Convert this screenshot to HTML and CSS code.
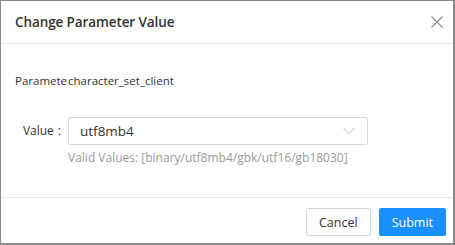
FILE: index.html
```html
<!DOCTYPE html>
<html lang="en">
<head>
    <meta charset="UTF-8">
    <meta name="viewport" content="width=device-width, initial-scale=1.0">
    <title>Change Parameter Value</title>
    <link rel="stylesheet" href="styles.css">
</head>
<body>

    <div class="dialog">
        <div class="dialog-header">
            <h2 class="dialog-title">Change Parameter Value</h2>
            <button class="close-btn" type="button" aria-label="Close">
                <svg width="12" height="12" viewBox="0 0 12 12">
                    <path d="M0.5 0.5 L11.5 11.5 M11.5 0.5 L0.5 11.5" stroke="#8c8c8c" stroke-width="1.1" fill="none"/>
                </svg>
            </button>
        </div>

        <div class="dialog-body">
            <div class="param-row">
                <span class="param-label">Parameter:</span>
                <span class="param-name">character_set_client</span>
            </div>

            <div class="form-row">
                <label class="form-label" for="value">Value</label>
                <div class="form-control">
                    <div class="select" id="value">
                        <span class="select-text">utf8mb4</span>
                        <svg class="select-arrow" width="12" height="8" viewBox="0 0 12 8">
                            <path d="M0.5 1 L6 6.5 L11.5 1" stroke="#c0c0c0" stroke-width="1" fill="none"/>
                        </svg>
                    </div>
                    <div class="help">Valid Values: [binary/utf8mb4/gbk/utf16/gb18030]</div>
                </div>
            </div>
        </div>

        <div class="dialog-footer">
            <button type="button" class="btn">Cancel</button>
            <button type="submit" class="btn btn-primary">Submit</button>
        </div>
    </div>

</body>
</html>
```

FILE: styles.css
```css
* {
    box-sizing: border-box;
    margin: 0;
    padding: 0;
}

body {
    font-family: "Open Sans", "Noto Sans", Arial, sans-serif;
    background-color: #fff;
    color: #333;
}

.dialog {
    width: 455px;
    height: 245px;
    border: 1px solid #8a8a8a;
    border-right-width: 2px;
    border-bottom-width: 2px;
    display: flex;
    flex-direction: column;
    background: #fff;
}

.dialog-header {
    height: 43px;
    padding: 0 10px 0 14px;
    display: flex;
    align-items: center;
    justify-content: space-between;
    border-bottom: 1px solid #e8e8e8;
}

.dialog-title {
    font-size: 13.5px;
    font-weight: 600;
    color: #333;
    letter-spacing: -0.1px;
}

.close-btn {
    background: none;
    border: none;
    width: 12px;
    height: 12px;
    display: flex;
    cursor: pointer;
}

.dialog-body {
    flex: 1;
    padding: 26px 14px 0 14px;
    font-size: 11.5px;
}

.param-row {
    display: flex;
    height: 20px;
    align-items: center;
}

.param-label {
    width: 53px;
    overflow: hidden;
    white-space: nowrap;
    color: #333;
}

.param-name {
    color: #333;
}

.form-row {
    display: flex;
    margin-top: 27px;
}

.form-label {
    width: 53px;
    height: 28px;
    line-height: 28px;
    text-align: right;
    font-size: 12px;
    color: #333;
}

.form-label::after {
    content: ":";
    margin: 0 7px 0 4px;
}

.form-control {
    width: 300px;
}

.select {
    height: 28px;
    border: 1px solid #d9d9d9;
    border-radius: 2px;
    padding: 0 12px 0 11px;
    display: flex;
    align-items: center;
    justify-content: space-between;
    font-size: 13.5px;
    color: #333;
}

.help {
    margin-top: 4px;
    color: #9a9a9a;
    font-size: 12px;
    line-height: 18px;
}

.dialog-footer {
    height: 46px;
    border-top: 1px solid #e8e8e8;
    display: flex;
    justify-content: flex-end;
    align-items: flex-start;
    gap: 8px;
    padding: 10px 7px 0 0;
}

.btn {
    height: 28px;
    padding: 0 12px;
    border: 1px solid #d9d9d9;
    border-radius: 2px;
    background: #fff;
    color: #333;
    font-family: inherit;
    font-size: 12.5px;
    cursor: pointer;
}

.btn-primary {
    background-color: #1890ff;
    border-color: #1890ff;
    color: #fff;
}
```
